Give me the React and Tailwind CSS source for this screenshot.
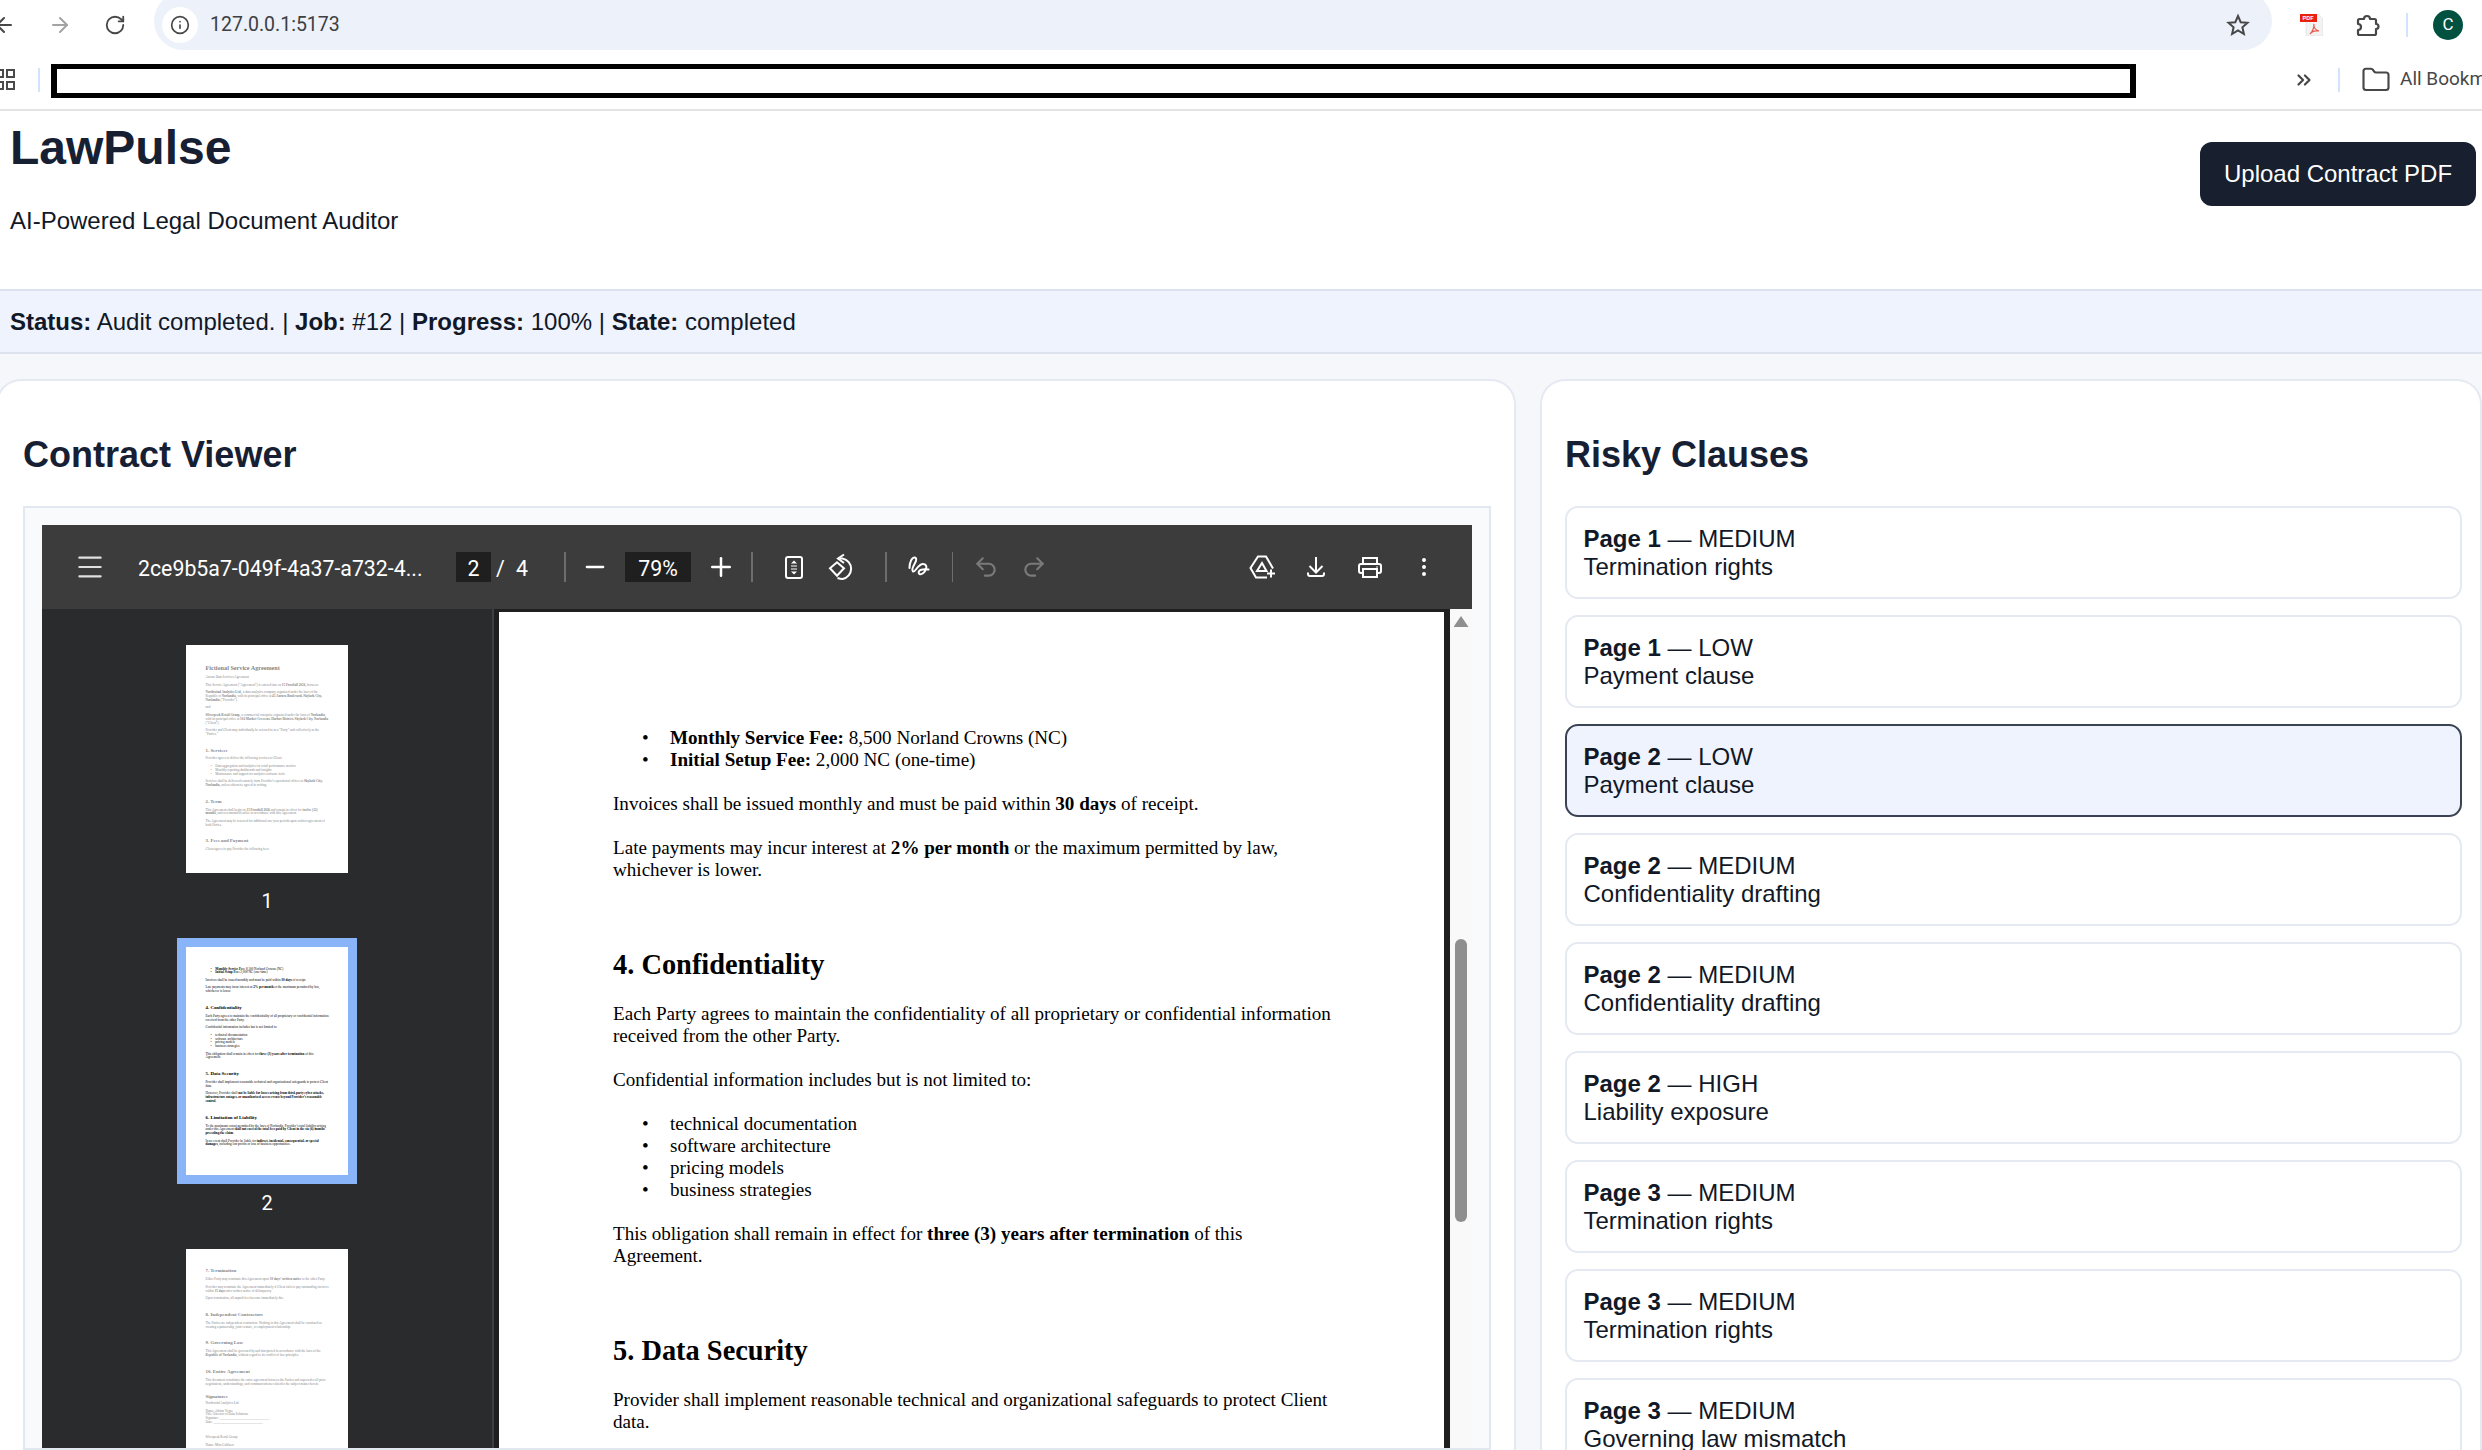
import React from 'react';
import { ArrowLeft, ArrowRight, RotateCw, Info, ChevronsRight, Folder, Menu, Minus, Plus, Undo2, Redo2, EllipsisVertical } from 'lucide-react';

const clauses = [
  { page: 1, level: 'MEDIUM', title: 'Termination rights' },
  { page: 1, level: 'LOW', title: 'Payment clause' },
  { page: 2, level: 'LOW', title: 'Payment clause', active: true },
  { page: 2, level: 'MEDIUM', title: 'Confidentiality drafting' },
  { page: 2, level: 'MEDIUM', title: 'Confidentiality drafting' },
  { page: 2, level: 'HIGH', title: 'Liability exposure' },
  { page: 3, level: 'MEDIUM', title: 'Termination rights' },
  { page: 3, level: 'MEDIUM', title: 'Termination rights' },
  { page: 3, level: 'MEDIUM', title: 'Governing law mismatch' },
];

// small pieces of the pdf page
function H2({ children }) {
  return <h2 className="mt-[68px] mb-[22px] text-[28.4px] leading-[32px] font-bold">{children}</h2>;
}

function P({ children }) {
  return <p className="mb-[22px]">{children}</p>;
}

function Bullets({ items }) {
  return (
    <ul className="mb-[22px]">
      {items.map((item, i) => (
        <li key={i} className="flex">
          <span className="w-[57px] shrink-0 pl-[29px]">•</span>
          <span>{item}</span>
        </li>
      ))}
    </ul>
  );
}

function PageOne() {
  return (
    <>
      <h1 className="mb-[22px] -mt-[4px] text-[36px] leading-[42px] font-bold">Fictional Service Agreement</h1>
      <P>Aurora Data Services Agreement</P>
      <P>This Service Agreement (“Agreement”) is entered into on <b>15 Frostfall 2026</b>, between:</P>
      <P><b>Northwind Analytics Ltd.</b>, a data analytics company organized under the laws of the Republic of <b>Norlandia</b>, with its principal office at <b>45 Aurora Boulevard, Skylark City, Norlandia</b> (“Provider”).</P>
      <P>and</P>
      <P><b>Silverpeak Retail Group</b>, a commercial enterprise organized under the laws of <b>Norlandia</b>, with its principal office at <b>102 Market Crescent, Harbor District, Skylark City, Norlandia</b> (“Client”).</P>
      <P>Provider and Client may individually be referred to as a “Party” and collectively as the “Parties.”</P>
      <H2>1. Services</H2>
      <P>Provider agrees to deliver the following services to Client:</P>
      <Bullets items={['Data aggregation and analytics for retail performance metrics', 'Monthly reporting dashboards and insights', 'Maintenance and support for analytics software tools']} />
      <P>Services shall be delivered remotely from Provider’s operational offices in <b>Skylark City, Norlandia</b>, unless otherwise agreed in writing.</P>
      <H2>2. Term</H2>
      <P>This Agreement shall begin on <b>15 Frostfall 2026</b> and remain in effect for <b>twelve (12) months</b>, unless terminated earlier in accordance with this Agreement.</P>
      <P>The Agreement may be renewed for additional one-year periods upon written agreement of both Parties.</P>
      <H2>3. Fees and Payment</H2>
      <P>Client agrees to pay Provider the following fees:</P>
    </>
  );
}

function PageTwo() {
  return (
    <>
      <Bullets items={[
        <><b>Monthly Service Fee:</b> 8,500 Norland Crowns (NC)</>,
        <><b>Initial Setup Fee:</b> 2,000 NC (one-time)</>,
      ]} />
      <P>Invoices shall be issued monthly and must be paid within <b>30 days</b> of receipt.</P>
      <P>Late payments may incur interest at <b>2% per month</b> or the maximum permitted by law, whichever is lower.</P>
      <H2>4. Confidentiality</H2>
      <P>Each Party agrees to maintain the confidentiality of all proprietary or confidential information received from the other Party.</P>
      <P>Confidential information includes but is not limited to:</P>
      <Bullets items={['technical documentation', 'software architecture', 'pricing models', 'business strategies']} />
      <P>This obligation shall remain in effect for <b>three (3) years after termination</b> of this Agreement.</P>
      <H2>5. Data Security</H2>
      <P>Provider shall implement reasonable technical and organizational safeguards to protect Client data.</P>
      <P>However, Provider shall <b>not be liable for losses arising from third-party cyber attacks, infrastructure outages, or unauthorized access events beyond Provider’s reasonable control</b>.</P>
      <H2>6. Limitation of Liability</H2>
      <P>To the maximum extent permitted by the laws of Norlandia, Provider’s total liability arising under this Agreement <b>shall not exceed the total fees paid by Client in the six (6) months preceding the claim</b>.</P>
      <P>In no event shall Provider be liable for <b>indirect, incidental, consequential, or special damages</b>, including lost profits or loss of business opportunities.</P>
    </>
  );
}

function PageThree() {
  return (
    <>
      <h2 className="mb-[22px] text-[28.4px] leading-[32px] font-bold">7. Termination</h2>
      <P>Either Party may terminate this Agreement upon <b>30 days’ written notice</b> to the other Party.</P>
      <P>Provider may terminate the Agreement immediately if Client fails to pay outstanding invoices within <b>15 days</b> after written notice of delinquency.</P>
      <P>Upon termination, all unpaid fees become immediately due.</P>
      <H2>8. Independent Contractors</H2>
      <P>The Parties are independent contractors. Nothing in this Agreement shall be construed as creating a partnership, joint venture, or employment relationship.</P>
      <H2>9. Governing Law</H2>
      <P>This Agreement shall be governed by and interpreted in accordance with the laws of the <b>Republic of Norlandia</b>, without regard to its conflict of law principles.</P>
      <H2>10. Entire Agreement</H2>
      <P>This document constitutes the entire agreement between the Parties and supersedes all prior negotiations, understandings, and communications related to the subject matter herein.</P>
      <h2 className="mt-[46px] mb-[14px] text-[28.4px] leading-[32px] font-bold">Signatures</h2>
      <P>Northwind Analytics Ltd.</P>
      <P>Name: Adrian Veyne<br />Title: Director of Data Solutions<br />Signature: ______________________________<br />Date: ______________________________</P>
      <P>&nbsp;</P>
      <P>Silverpeak Retail Group</P>
      <P>Name: Mira Caldwen</P>
    </>
  );
}

// same page markup is used for the big view and for the thumbnails
function PdfPage({ top, children }) {
  return (
    <div className={`w-[945px] h-[1336px] bg-white pl-[114px] pr-[112px] ${top} font-['Liberation_Serif',serif] text-[19.1px] leading-[22px] text-black`}>
      {children}
    </div>
  );
}

function Thumb({ num, top, active, children }) {
  return (
    <div className="flex flex-col items-center">
      <div className={`border-[9px] ${active ? 'border-[#8ab4f8]' : 'border-transparent'}`}>
        <div className="w-[162px] h-[228px] overflow-hidden bg-white">
          <div className={`w-[945px] origin-top-left scale-[0.1714] ${active ? '' : 'opacity-50'}`}>
            <PdfPage top={top}>{children}</PdfPage>
          </div>
        </div>
      </div>
      <div className="mt-[6px] mb-[24px] h-[26px] text-[20px] leading-[26px] text-white font-['Roboto',sans-serif]">{num}</div>
    </div>
  );
}

function ToolSep({ className }) {
  return <div className={`w-[2px] h-[30px] bg-[#6d6d6d] shrink-0 ${className}`} />;
}

function DriveIcon() {
  return (
    <svg width="28" height="24" viewBox="0 0 28 24" fill="none" stroke="currentColor" strokeWidth="2">
      <path d="M24 13.5 17 1.5H9L1.5 13l5.5 9.5h11" />
      <path d="m13 8 4.500 8H8z" />
      <path d="M22 14.500v8M18 18.500h8" />
    </svg>
  );
}

function DownloadIcon() {
  return (
    <svg width="18" height="20" viewBox="0 0 18 20" fill="none" stroke="currentColor" strokeWidth="2">
      <path d="M9 0v15.500M2.500 9 9 15.500 15.500 9" />
      <path d="M1 15.500V17a2 2 0 0 0 2 2h12a2 2 0 0 0 2-2v-1.500" />
    </svg>
  );
}

function PrintIcon() {
  return (
    <svg width="24" height="21" viewBox="0 0 24 21" fill="none" stroke="currentColor" strokeWidth="2">
      <path d="M5 7V1h14v6" />
      <path d="M5 16H3a2 2 0 0 1-2-2V9a2 2 0 0 1 2-2h18a2 2 0 0 1 2 2v5a2 2 0 0 1-2 2h-2" />
      <rect x="5" y="12" width="14" height="8" />
      <circle cx="19" cy="10" r="0.8" fill="currentColor" stroke="none" />
    </svg>
  );
}

function FitIcon() {
  return (
    <svg width="18" height="23" viewBox="0 0 18 23" fill="none" stroke="currentColor" strokeWidth="2">
      <rect x="1" y="1" width="16" height="21" rx="2" />
      <path d="M9 4.500 12 7.500H6zM9 18.500 12 15.500H6z" fill="currentColor" stroke="none" />
      <path d="M6 10h6M6 13h6" strokeWidth="1" />
    </svg>
  );
}

function RotateIcon() {
  return (
    <svg width="28" height="28" viewBox="0 0 28 28" fill="none" stroke="currentColor" strokeWidth="2">
      <path d="M2 15.300 9 9.300l7 6-7 7.400z" />
      <path d="M12 5.500h2.500a11 10.500 0 0 1 0 20.500c-2 0-3.500-.5-5-1" />
      <path d="M16 1.500 10 5.500 16 10" />
    </svg>
  );
}

function DrawIcon() {
  return (
    <svg width="25" height="24" viewBox="0 0 25 24" fill="none" stroke="currentColor" strokeWidth="2" strokeLinecap="round">
      <path d="M2.500 13C2.500 7 5 2.500 7.500 2.500c2.500 0 2 3 0 6.500-2 3.500-3 6-1.500 7.500 2 1.500 5-7.500 10-7.500 3 0 4 2.500 3 5-1 3-4 6-6.500 5-1.500-.8-1-3 1-4 2.500-1 5-1 8-.5" />
    </svg>
  );
}

function StarIcon() {
  return (
    <svg width="24" height="24" viewBox="0 0 24 24" fill="none" stroke="currentColor" strokeWidth="2" strokeLinejoin="miter" className="ml-auto mr-[22px]">
      <path d="m12 3 2.700 6.200 6.800.6-5.100 4.500 1.500 6.700L12 17.500 6.100 21l1.500-6.700-5.100-4.500 6.800-.6z" />
    </svg>
  );
}

function PdfExtIcon() {
  return (
    <svg width="23" height="22" viewBox="0 0 23 22">
      <path d="M6 0h12l5 5v17H6z" fill="#f3f3f3" stroke="#dcdcdc" strokeWidth="0.6" />
      <rect x="0" y="0" width="17" height="8" fill="#e8200c" />
      <text x="2.500" y="6.300" fontSize="5.500" fontWeight="700" fontFamily="Liberation Sans" fill="#fff">PDF</text>
      <path d="M14 10c-1 4 2 6 5 7-3-.5-7 0-9 3 2-2 4-6 4-10z" fill="none" stroke="#e8574b" strokeWidth="1.2" />
    </svg>
  );
}

function PuzzleIcon() {
  return (
    <svg width="25" height="24" viewBox="0 0 25 24" fill="none" stroke="currentColor" strokeWidth="2.2" strokeLinejoin="round" className="ml-[33px] shrink-0">
      <path d="M2 7.500A1.500 1.500 0 0 1 3.500 6H8a3 3 0 0 1 6 0h4.500A1.500 1.500 0 0 1 20 7.500V11a2.500 2.500 0 0 1 0 5v4.500a1.500 1.500 0 0 1-1.500 1.500h-15A1.500 1.500 0 0 1 2 20.500V17a3 3 0 0 0 0-6z" />
    </svg>
  );
}

function AppsIcon() {
  return (
    <svg width="15" height="22" viewBox="0 0 15 22" fill="none" stroke="#4a4a4a" strokeWidth="2" className="shrink-0">
      <rect x="-4" y="1" width="7" height="7" />
      <rect x="7" y="1" width="7" height="7" />
      <rect x="-4" y="13" width="7" height="7" />
      <rect x="7" y="13" width="7" height="7" />
    </svg>
  );
}

function BrowserBar() {
  return (
    <div className="border-b-2 border-[#e3e3e3] font-['Roboto',sans-serif]">
      <div className="flex items-center h-[50px] overflow-hidden text-[#474747]">
        <ArrowLeft size={24} className="-ml-[8px] shrink-0" />
        <ArrowRight size={24} className="ml-[32px] shrink-0 text-[#a3a3a3]" />
        <RotateCw size={22} className="ml-[32px] shrink-0" />
        <div className="ml-[28px] -mt-[8px] pt-[8px] h-[58px] w-[2118px] shrink-0 rounded-full bg-[#edf1f9] flex items-center">
          <div className="ml-[8px] w-[36px] h-[36px] rounded-full bg-white flex items-center justify-center">
            <Info size={20} strokeWidth={2} />
          </div>
          <span className="ml-[12px] text-[19.5px] text-[#3c3f43]">127.0.0.1:5173</span>
          <StarIcon />
        </div>
        <div className="ml-[28px] shrink-0"><PdfExtIcon /></div>
        <PuzzleIcon />
        <div className="ml-[25px] w-[2px] h-[24px] bg-[#d3e3fd] shrink-0" />
        <div className="ml-[25px] w-[30px] h-[30px] rounded-full bg-[#00513f] text-white text-[17px] flex items-center justify-center shrink-0">C</div>
      </div>
      <div className="flex items-center h-[59px] overflow-hidden text-[#474747]">
        <AppsIcon />
        <div className="ml-[23px] w-[2px] h-[24px] bg-[#d3e3fd] shrink-0" />
        <div className="ml-[11px] mt-[2px] w-[2085px] h-[34px] border-y-[5px] border-x-[6px] border-black bg-white shrink-0" />
        <ChevronsRight size={22} strokeWidth={2.4} className="ml-[157px] shrink-0" />
        <div className="ml-[23px] w-[2px] h-[24px] bg-[#d3e3fd] shrink-0" />
        <Folder size={30} strokeWidth={1.7} className="ml-[21px] shrink-0" />
        <span className="ml-[9px] text-[19px] whitespace-nowrap">All Bookmarks</span>
      </div>
    </div>
  );
}

function PdfToolbar() {
  return (
    <div className="flex items-center h-[84px] bg-[#3c3c3c] text-white font-['Roboto',sans-serif] text-[21.3px] pl-[32px]">
      <Menu size={32} strokeWidth={1.6} className="shrink-0 text-[#e0e0e0]" />
      <span className="ml-[32px] mt-[3px] w-[285px] shrink-0 whitespace-nowrap">2ce9b5a7-049f-4a37-a732-4...</span>
      <div className="ml-[33px] w-[35px] h-[30px] pt-[3px] bg-[#1f1f1f] flex items-center justify-center shrink-0">2</div>
      <span className="ml-[5px] mt-[3px] w-[8px] text-center shrink-0">/</span>
      <span className="ml-[12px] mt-[3px] w-[11px] text-center shrink-0">4</span>
      <ToolSep className="ml-[37px]" />
      <Minus size={28} className="ml-[15px] shrink-0" />
      <div className="ml-[16px] w-[66px] h-[30px] pt-[3px] bg-[#1f1f1f] flex items-center justify-center shrink-0">79%</div>
      <Plus size={30} className="ml-[15px] shrink-0" />
      <ToolSep className="ml-[15px]" />
      <div className="ml-[32px] shrink-0"><FitIcon /></div>
      <div className="ml-[25px] shrink-0"><RotateIcon /></div>
      <ToolSep className="ml-[29px]" />
      <div className="ml-[20px] shrink-0"><DrawIcon /></div>
      <div className="ml-[20px] w-px h-[30px] bg-[#6d6d6d] shrink-0" />
      <Undo2 size={26} className="ml-[20px] shrink-0 text-[#7a7a7a]" />
      <Redo2 size={26} className="ml-[22px] shrink-0 text-[#7a7a7a]" />
      <div className="ml-[202px] shrink-0"><DriveIcon /></div>
      <div className="ml-[30px] shrink-0"><DownloadIcon /></div>
      <div className="ml-[33px] shrink-0"><PrintIcon /></div>
      <EllipsisVertical size={24} className="ml-[30px] shrink-0" />
    </div>
  );
}

function PdfViewer() {
  return (
    <div className="border-2 border-[#e2e8f0] bg-[#f8fafc] pt-[17px] pl-[17px] pr-[17px] h-[944px] overflow-hidden">
      <PdfToolbar />
      <div className="flex">
        {/* thumbnails */}
        <div className="w-[452px] h-[860px] overflow-hidden bg-[#2a2b2d] border-r-2 border-[#3f3f3f] pt-[27px] shrink-0">
          <Thumb num="1" top="pt-[117px]"><PageOne /></Thumb>
          <Thumb num="2" top="pt-[115px]" active><PageTwo /></Thumb>
          <Thumb num="3" top="pt-[112px]"><PageThree /></Thumb>
        </div>
        {/* page view */}
        <div className="w-[956px] bg-[#1f1f1f] pt-[3px] pl-[5px] overflow-hidden shrink-0">
          <PdfPage top="pt-[115px]"><PageTwo /></PdfPage>
        </div>
        {/* scrollbar */}
        <div className="flex-1 flex flex-col items-center pt-[7px] bg-[#f9f9f9]">
          <div className="w-[15px] h-[11px] bg-[#8f8f8f] [clip-path:polygon(50%_0,100%_100%,0_100%)]" />
          <div className="mt-[312px] w-[12px] h-[283px] rounded-full bg-[#8f8f8f]" />
        </div>
      </div>
    </div>
  );
}

export default function App() {
  return (
    <div className="w-[2482px] h-[1450px] overflow-hidden bg-white font-['Liberation_Sans',sans-serif] text-[#111827]">
      <BrowserBar />

      {/* header */}
      <div className="flex justify-between h-[178px] pl-[10px] pr-[6px]">
        <div>
          <h1 className="mt-[9px] text-[48px] leading-[56px] font-bold text-[#172033]">LawPulse</h1>
          <p className="mt-[31px] text-[24px] leading-[28px]">AI-Powered Legal Document Auditor</p>
        </div>
        <button className="mt-[31px] h-[64px] w-[276px] rounded-[12px] bg-[#18202f] text-white text-[24px] font-medium">
          Upload Contract PDF
        </button>
      </div>

      {/* status */}
      <div className="h-[65px] border-y-2 border-[#dde3ee] bg-[#eff3fe] pl-[10px] flex items-center text-[24px] whitespace-pre">
        <b>Status:</b> Audit completed. | <b>Job:</b> #12 | <b>Progress:</b> 100% | <b>State:</b> completed
      </div>

      {/* main columns */}
      <div className="flex gap-[24px] bg-[#f5f7fb] pt-[25px] -ml-[4px]">
        <section className="w-[1520px] shrink-0 rounded-t-[25px] border-2 border-b-0 border-[#e5e9f1] bg-white pt-[52px] pl-[25px] pr-[23px]">
          <h2 className="mb-[29px] text-[36px] leading-[44px] font-bold text-[#172033]">Contract Viewer</h2>
          <PdfViewer />
        </section>

        <section className="flex-1 rounded-t-[25px] border-2 border-b-0 border-[#e5e9f1] bg-white pt-[52px] pl-[23px] pr-[18px]">
          <h2 className="mb-[29px] text-[36px] leading-[44px] font-bold text-[#172033]">Risky Clauses</h2>
          <div className="flex flex-col gap-[16px] h-[944px] overflow-hidden">
            {clauses.map((c, i) => (
              <div
                key={i}
                className={`shrink-0 rounded-[13px] border-2 px-[16.5px] py-[16.5px] text-[24px] leading-[28px] ${c.active ? 'border-[#3a4354] bg-[#eff3fe]' : 'border-[#e5e9f1] bg-white'}`}
              >
                <div><b>Page {c.page}</b> — {c.level}</div>
                <div>{c.title}</div>
              </div>
            ))}
          </div>
        </section>
      </div>
    </div>
  );
}
